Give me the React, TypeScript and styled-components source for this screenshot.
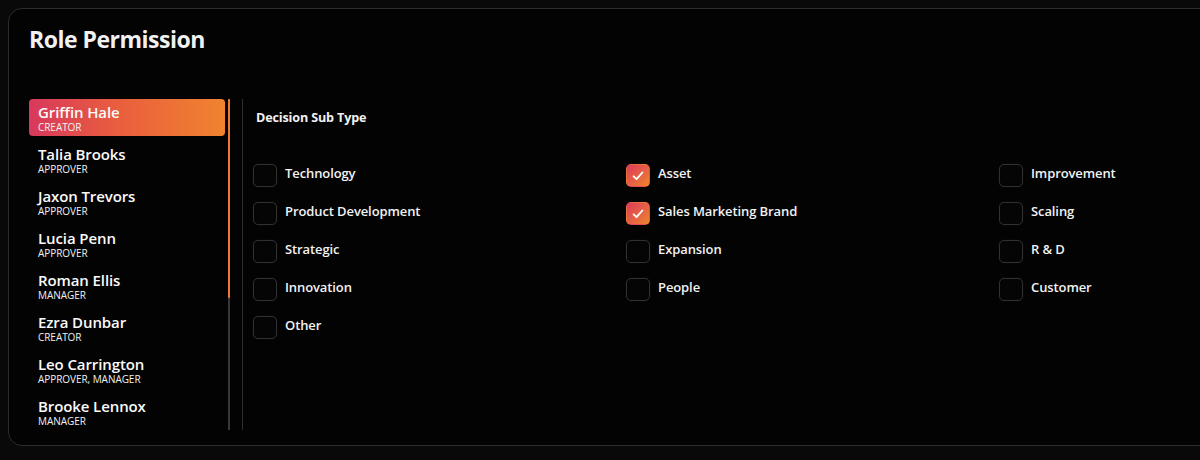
import React, { useState } from "react";
import styled, { createGlobalStyle } from "styled-components";

const Global = createGlobalStyle`
  html, body { margin: 0; padding: 0; background: #090909; overflow: hidden; }
  body { font-family: "Open Sans", "Noto Sans", sans-serif; color: #f2f2f2; }
`;

const Page = styled.div`
  width: 1200px;
  height: 460px;
  padding: 8px 0 0 8px;
  box-sizing: border-box;
  overflow: hidden;
`;

const Card = styled.section`
  width: 1390px;
  height: 438px;
  box-sizing: border-box;
  background: #030303;
  border: 1px solid #2c2c2c;
  border-radius: 14px;
  padding: 15px 20px 14px 20px;
  display: flex;
  flex-direction: column;
`;

const Title = styled.h1`
  margin: 0;
  font-size: 23px;
  line-height: 30px;
  font-weight: 700;
  color: #f1f1f1;
  letter-spacing: -0.5px;
`;

const Body = styled.div`
  margin-top: 45px;
  display: flex;
  height: 331px;
`;

const ListColumn = styled.div`
  display: flex;
  gap: 3px;
  height: 100%;
`;

const List = styled.div`
  width: 196px;
  height: 100%;
  overflow: hidden;
  display: flex;
  flex-direction: column;
  gap: 5px;
`;

const ScrollTrack = styled.div`
  width: 2px;
  height: 100%;
  background: #383838;
  display: flex;
  flex-direction: column;
`;

const ScrollThumb = styled.div`
  width: 100%;
  background: #ef7a2f;
  border-radius: 1px;
`;

const Item = styled.div<{ $active?: boolean }>`
  flex: 0 0 auto;
  width: 196px;
  height: 37px;
  box-sizing: border-box;
  padding: 3px 9px 0;
  border-radius: 4px;
  background: ${(p) => (p.$active ? "linear-gradient(to right, #d8385c, #e95e3e 45%, #f0832f)" : "transparent")};
  display: flex;
  flex-direction: column;
  cursor: pointer;
`;

const Name = styled.div`
  font-size: 15px;
  line-height: 20px;
  font-weight: 600;
  color: #fafafa;
  letter-spacing: -0.1px;
`;

const Role = styled.div`
  font-size: 10px;
  line-height: 11px;
  font-weight: 500;
  color: #f0f0f0;
  text-transform: uppercase;
  letter-spacing: -0.05px;
`;

const Divider = styled.div`
  width: 1px;
  height: 100%;
  margin-left: 12px;
  background: #2e2e2e;
`;

const Panel = styled.div`
  flex: 1;
  padding-left: 10px;
  display: flex;
  flex-direction: column;
`;

const SubTitle = styled.h2`
  margin: 10px 0 0 3px;
  font-size: 12.6px;
  line-height: 18px;
  font-weight: 700;
  color: #f2f2f2;
  letter-spacing: -0.15px;
`;

const Grid = styled.div`
  margin-top: 37px;
  display: grid;
  grid-template-columns: repeat(3, 373px);
  row-gap: 15px;
`;

const Option = styled.label`
  display: flex;
  align-items: flex-start;
  gap: 8px;
  cursor: pointer;
`;

const Box = styled.span<{ $checked: boolean }>`
  width: 24px;
  height: 23px;
  box-sizing: border-box;
  border-radius: 5px;
  border: 1px solid ${(p) => (p.$checked ? "transparent" : "#303030")};
  background: ${(p) => (p.$checked ? "linear-gradient(135deg, #dc3a5c, #f0842e)" : "#050505")};
  box-shadow: ${(p) => (p.$checked ? "none" : "0 0 2px rgba(255,255,255,0.07)")};
  display: flex;
  align-items: center;
  justify-content: center;
  flex: 0 0 auto;
`;

const OptionText = styled.span`
  padding-top: 1px;
  font-size: 13px;
  line-height: 16px;
  font-weight: 600;
  color: #f2f2f2;
  letter-spacing: -0.1px;
`;

const people = [
  ["Griffin Hale", "Creator"],
  ["Talia Brooks", "Approver"],
  ["Jaxon Trevors", "Approver"],
  ["Lucia Penn", "Approver"],
  ["Roman Ellis", "Manager"],
  ["Ezra Dunbar", "Creator"],
  ["Leo Carrington", "Approver, Manager"],
  ["Brooke Lennox", "Manager"],
];

const options = [
  "Technology", "Asset", "Improvement",
  "Product Development", "Sales Marketing Brand", "Scaling",
  "Strategic", "Expansion", "R & D",
  "Innovation", "People", "Customer",
  "Other",
];

const Check = () => (
  <svg width="14" height="14" viewBox="0 0 24 24" fill="none" stroke="#fff" strokeWidth="3.2" strokeLinecap="round" strokeLinejoin="round">
    <path d="M4.5 12.5l5 5L19.5 6" />
  </svg>
);

export default function App() {
  const [active, setActive] = useState(0);
  const [checked, setChecked] = useState<Record<string, boolean>>({ Asset: true, "Sales Marketing Brand": true });
  const thumbRatio = 0.6;
  return (
    <>
      <Global />
      <Page>
        <Card>
          <Title>Role Permission</Title>
          <Body>
            <ListColumn>
              <List>
                {people.map(([n, r], i) => (
                  <Item key={n} $active={i === active} onClick={() => setActive(i)}>
                    <Name>{n}</Name>
                    <Role>{r}</Role>
                  </Item>
                ))}
              </List>
              <ScrollTrack>
                <ScrollThumb style={{ height: `${thumbRatio * 100}%` }} />
              </ScrollTrack>
            </ListColumn>
            <Divider />
            <Panel>
              <SubTitle>Decision Sub Type</SubTitle>
              <Grid>
                {options.map((o) => (
                  <Option key={o} onClick={() => setChecked((c) => ({ ...c, [o]: !c[o] }))}>
                    <Box $checked={!!checked[o]}>{checked[o] && <Check />}</Box>
                    <OptionText>{o}</OptionText>
                  </Option>
                ))}
              </Grid>
            </Panel>
          </Body>
        </Card>
      </Page>
    </>
  );
}
